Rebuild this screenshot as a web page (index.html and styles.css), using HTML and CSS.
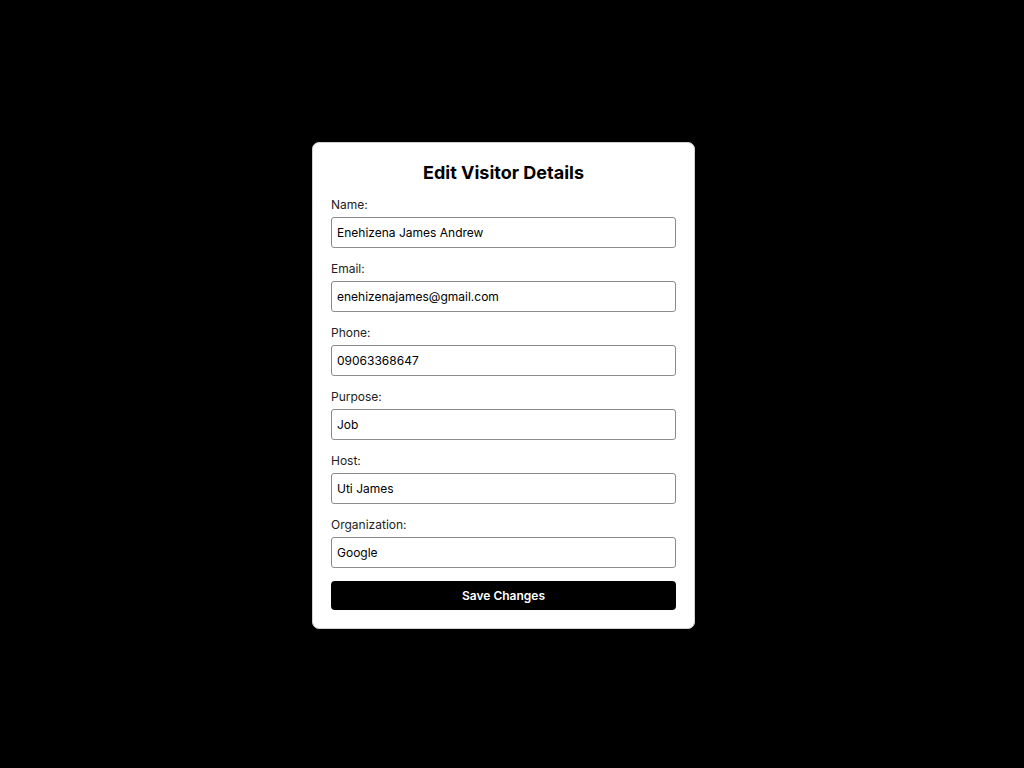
FILE: index.html
```html
<!DOCTYPE html>
<html>
<head>
<meta charset="utf-8">
<link rel="stylesheet" href="styles.css">
</head>
<body>
<div class="overlay">
  <div class="card">
    <h2 class="title">Edit Visitor Details</h2>
    <form class="form">
      <div class="field">
        <label class="label">Name:</label>
        <input class="input" type="text" value="Enehizena James Andrew">
      </div>
      <div class="field">
        <label class="label">Email:</label>
        <input class="input" type="text" value="enehizenajames@gmail.com">
      </div>
      <div class="field">
        <label class="label">Phone:</label>
        <input class="input" type="text" value="09063368647">
      </div>
      <div class="field">
        <label class="label">Purpose:</label>
        <input class="input" type="text" value="Job">
      </div>
      <div class="field">
        <label class="label">Host:</label>
        <input class="input" type="text" value="Uti James">
      </div>
      <div class="field">
        <label class="label">Organization:</label>
        <input class="input" type="text" value="Google">
      </div>
      <button class="btn" type="button">Save Changes</button>
    </form>
  </div>
</div>
</body>
</html>
```

FILE: styles.css
```css
html, body {
  margin: 0;
  padding: 0;
  background: #000;
  font-family: Inter, "Noto Sans", sans-serif;
}
.overlay {
  box-sizing: border-box;
  width: 1024px;
  height: 768px;
  padding-right: 17px;
  display: flex;
  align-items: flex-start;
  justify-content: center;
}
.card {
  margin-top: 142px;
  width: 345px;
  padding: 19px 18px 18px;
  background: #fff;
  border: 1px solid #d0d0d0;
  border-radius: 7px;
}
.title {
  margin: 0 0 13px;
  font-size: 18px;
  line-height: 22px;
  font-weight: 700;
  text-align: center;
  color: #000;
}
.form {
  display: flex;
  flex-direction: column;
}
.field {
  display: flex;
  flex-direction: column;
  margin-bottom: 13px;
}
.label {
  font-size: 12px;
  line-height: 16px;
  color: #222;
  margin-bottom: 4px;
}
.input {
  box-sizing: border-box;
  height: 31px;
  width: 100%;
  padding: 0 5px;
  border: 1px solid #8a8a8a;
  border-radius: 3px;
  font-family: Inter, "Noto Sans", sans-serif;
  font-size: 12px;
  color: #000;
  background: #fff;
  margin: 0;
}
.btn {
  height: 29px;
  width: 100%;
  margin-top: 0;
  border: none;
  border-radius: 4px;
  background: #000;
  color: #fff;
  font-family: Inter, "Noto Sans", sans-serif;
  font-size: 12px;
  font-weight: 600;
  cursor: pointer;
}
```
